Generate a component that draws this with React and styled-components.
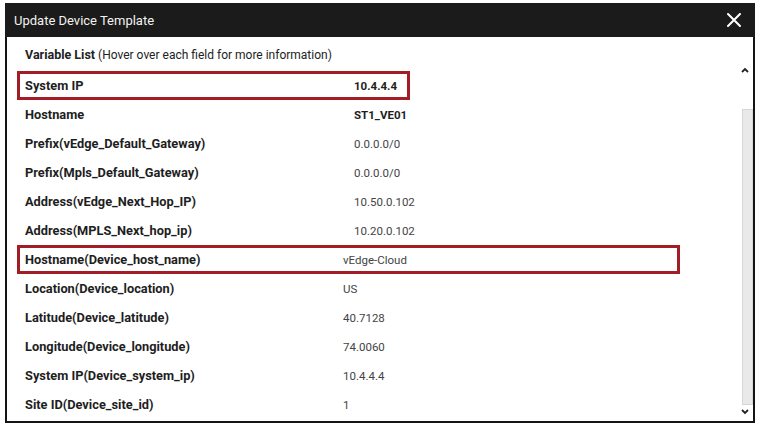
import styled, { createGlobalStyle } from "styled-components";

const Global = createGlobalStyle`
    body {
        margin: 0;
        background: #fff;
        font-family: Roboto, "Liberation Sans", sans-serif;
    }
`

const Dialog = styled.div`
    margin: 3px 6px 0 5px;
    width: 750px;
    height: 420px;
    box-sizing: border-box;
    border: 2px solid #141414;
    border-top: none;
    display: flex;
    flex-direction: column;
    background: #fff;
`
const Header = styled.div`
    height: 34px;
    background: #1b1b1b;
    display: flex;
    align-items: center;
    justify-content: space-between;
    padding: 0 12px 0 9px;
    margin: 0 -2px;
    color: #f2f2f2;
    font-size: 13px;
`
const Close = styled.svg`
    width: 14px;
    height: 14px;
    margin-right: 2px;
`
const Body = styled.div`
    flex: 1;
    display: flex;
`
const Content = styled.div`
    flex: 1;
    padding: 9px 0 0 10px;
`
const Heading = styled.div`
    font-size: 12px;
    color: #222;
    line-height: 18px;
    padding-left: 8px;
    margin-bottom: 7px;
    b {
        font-size: 12.5px;
        font-weight: 700;
    }
`
const Row = styled.div`
    display: flex;
    align-items: center;
    box-sizing: border-box;
    height: 29px;
    width: ${(p) => p.width || "660px"};
    border: 3px solid ${(p) => (p.highlight ? "#a31d27" : "transparent")};
    padding-left: 5px;
`
const Label = styled.div`
    width: ${(p) => p.col}px;
    font-size: 12.8px;
    font-weight: 700;
    color: #1e1e1e;
`
const Value = styled.div`
    font-size: 11.5px;
    color: ${(p) => (p.bold ? "#1e1e1e" : "#444")};
    font-weight: ${(p) => (p.bold ? 700 : 400)};
`
const Scroll = styled.div`
    width: 16px;
    display: flex;
    flex-direction: column;
    align-items: center;
    padding: 30px 0 6px;
`
const Caret = styled.svg`
    width: 8px;
    height: 6px;
`
const Track = styled.div`
    flex: 1;
    width: 9px;
    margin: 36px 0 4px 4px;
    background: #e9e9e9;
    border: 1px solid #d6d6d6;
`

const rows = [
    { label: "System IP", value: "10.4.4.4", bold: true, highlight: true, width: "393px", col: 329 },
    { label: "Hostname", value: "ST1_VE01", bold: true, col: 329 },
    { label: "Prefix(vEdge_Default_Gateway)", value: "0.0.0.0/0", col: 329 },
    { label: "Prefix(Mpls_Default_Gateway)", value: "0.0.0.0/0", col: 329 },
    { label: "Address(vEdge_Next_Hop_IP)", value: "10.50.0.102", col: 329 },
    { label: "Address(MPLS_Next_hop_ip)", value: "10.20.0.102", col: 329 },
    { label: "Hostname(Device_host_name)", value: "vEdge-Cloud", highlight: true, width: "663px", col: 318 },
    { label: "Location(Device_location)", value: "US", col: 318 },
    { label: "Latitude(Device_latitude)", value: "40.7128", col: 318 },
    { label: "Longitude(Device_longitude)", value: "74.0060", col: 318 },
    { label: "System IP(Device_system_ip)", value: "10.4.4.4", col: 318 },
    { label: "Site ID(Device_site_id)", value: "1", col: 318 },
]

const App = () => {
    return (
        <>
            <Global />
            <Dialog>
                <Header>
                    <span>Update Device Template</span>
                    <Close viewBox="0 0 14 14">
                        <path d="M1 1L13 13M13 1L1 13" stroke="#fff" strokeWidth="2" strokeLinecap="round" />
                    </Close>
                </Header>
                <Body>
                    <Content>
                        <Heading>
                            <b>Variable List</b> (Hover over each field for more information)
                        </Heading>
                        {rows.map((r) => (
                            <Row key={r.label} highlight={r.highlight} width={r.width}>
                                <Label col={r.col}>{r.label}</Label>
                                <Value bold={r.bold}>{r.value}</Value>
                            </Row>
                        ))}
                    </Content>
                    <Scroll>
                        <Caret viewBox="0 0 8 6">
                            <path d="M1 5L4 2L7 5" stroke="#222" strokeWidth="1.8" fill="none" />
                        </Caret>
                        <Track />
                        <Caret viewBox="0 0 8 6">
                            <path d="M1 1L4 4L7 1" stroke="#222" strokeWidth="1.8" fill="none" />
                        </Caret>
                    </Scroll>
                </Body>
            </Dialog>
        </>
    )
}

export default App;
